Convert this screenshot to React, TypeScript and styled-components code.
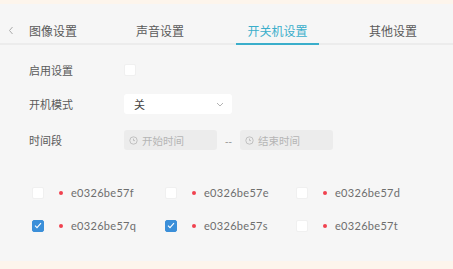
import React from "react";
import styled, { createGlobalStyle } from "styled-components";

const Global = createGlobalStyle`
  html, body { margin: 0; padding: 0; background: #fdf5ec; }
  body { font-family: "Noto Sans CJK SC", "Noto Sans", sans-serif; }
`;

const Page = styled.div`
  width: 453px;
  height: 269px;
  display: flex;
  flex-direction: column;
  background: #fdf5ec;
`;

const Panel = styled.div`
  margin-top: 4px;
  height: 257px;
  background: #f6f6f6;
  display: flex;
  flex-direction: column;
`;

const TabBar = styled.div`
  height: 39px;
  display: flex;
  align-items: stretch;
  border-bottom: 2px solid #ececec;
  padding-left: 8px;
`;

const Arrow = styled.div`
  width: 14px;
  flex-shrink: 0;
  display: flex;
  align-items: flex-end;
  padding-bottom: 8px;
  box-sizing: border-box;
  color: #aaa;
`;

const Tab = styled.div<{ $active?: boolean; $w: number; $pl?: number }>`
  width: ${(p) => p.$w}px;
  flex-shrink: 0;
  display: flex;
  align-items: flex-end;
  justify-content: center;
  font-size: 12px;
  line-height: 14px;
  padding: 0 0 5px ${(p) => p.$pl ?? 0}px;
  box-sizing: border-box;
  color: ${(p) => (p.$active ? "#3aaecb" : "#5a5a5a")};
  position: relative;
  &::after {
    content: "";
    display: ${(p) => (p.$active ? "block" : "none")};
    position: absolute;
    left: 0;
    right: 0;
    bottom: -2px;
    height: 2px;
    background: #3aaecb;
  }
`;

const Form = styled.div`
  display: flex;
  flex-direction: column;
  padding: 8px 0 0 29px;
`;

const Row = styled.div<{ $h: number }>`
  height: ${(p) => p.$h}px;
  display: flex;
  align-items: center;
`;

const Label = styled.div`
  width: 95px;
  font-size: 11px;
  color: #5a5a5a;
`;

const Box = styled.div<{ $checked?: boolean }>`
  width: 12px;
  height: 12px;
  border-radius: 2px;
  background: ${(p) => (p.$checked ? "#3b8fd9" : "#fff")};
  border: 1px solid ${(p) => (p.$checked ? "#3b8fd9" : "#f0f0f0")};
  box-sizing: border-box;
  display: flex;
  align-items: center;
  justify-content: center;
  flex-shrink: 0;
`;

const Select = styled.div`
  width: 108px;
  height: 20px;
  background: #fff;
  border-radius: 3px;
  box-sizing: border-box;
  padding: 0 8px 0 10px;
  display: flex;
  align-items: center;
  justify-content: space-between;
  font-size: 11px;
  color: #444;
`;

const TimeInput = styled.div`
  width: 93px;
  height: 20px;
  background: #ececec;
  border-radius: 3px;
  box-sizing: border-box;
  padding-left: 5px;
  display: flex;
  align-items: center;
  gap: 4px;
  font-size: 10.5px;
  color: #b5b5b5;
`;

const Sep = styled.div`
  width: 23px;
  text-align: center;
  font-size: 10px;
  color: #888;
`;

const Grid = styled.div`
  display: grid;
  grid-template-columns: 133px 131px 120px;
  row-gap: 14px;
  padding: 25px 0 0 32px;
`;

const Item = styled.div`
  display: flex;
  align-items: center;
  height: 19px;
`;

const Dot = styled.div`
  width: 4px;
  height: 4px;
  border-radius: 50%;
  background: #f0414f;
  margin: 0 8px 0 15px;
`;

const Code = styled.div`
  font-family: "Lato", "Open Sans", sans-serif;
  font-size: 11px;
  color: #6e6e6e;
  letter-spacing: 0.3px;
`;

const Check = () => (
  <svg width="8" height="7" viewBox="0 0 8 7">
    <path d="M1 3.6 L3 5.6 L7 1.2" fill="none" stroke="#fff" strokeWidth="1.1" />
  </svg>
);

const Clock = () => (
  <svg width="9" height="9" viewBox="0 0 9 9">
    <circle cx="4.5" cy="4.5" r="3.7" fill="none" stroke="#bbb" strokeWidth="0.9" />
    <path d="M4.5 2.6 V4.6 H6" fill="none" stroke="#bbb" strokeWidth="0.9" />
  </svg>
);

const items = [
  { id: "e0326be57f", c: false },
  { id: "e0326be57e", c: false },
  { id: "e0326be57d", c: false },
  { id: "e0326be57q", c: true },
  { id: "e0326be57s", c: true },
  { id: "e0326be57t", c: false },
];

export default function App() {
  return (
    <Page>
      <Global />
      <Panel>
        <TabBar>
          <Arrow>
            <svg width="6" height="9" viewBox="0 0 6 9">
              <path d="M4.5 1 L1.5 4.5 L4.5 8" fill="none" stroke="#aaa" strokeWidth="1" />
            </svg>
          </Arrow>
          <Tab $w={62}>图像设置</Tab>
          <Tab $w={152}>声音设置</Tab>
          <Tab $w={83} $active>开关机设置</Tab>
          <Tab $w={134} $pl={14}>其他设置</Tab>
        </TabBar>
        <Form>
          <Row $h={33}>
            <Label>启用设置</Label>
            <Box />
          </Row>
          <Row $h={36}>
            <Label>开机模式</Label>
            <Select>
              <span>关</span>
              <svg width="8" height="5" viewBox="0 0 8 5">
                <path d="M1 1 L4 4 L7 1" fill="none" stroke="#aaa" strokeWidth="0.9" />
              </svg>
            </Select>
          </Row>
          <Row $h={36}>
            <Label>时间段</Label>
            <TimeInput>
              <Clock />
              开始时间
            </TimeInput>
            <Sep>--</Sep>
            <TimeInput>
              <Clock />
              结束时间
            </TimeInput>
          </Row>
        </Form>
        <Grid>
          {items.map((it) => (
            <Item key={it.id}>
              <Box $checked={it.c}>{it.c && <Check />}</Box>
              <Dot />
              <Code>{it.id}</Code>
            </Item>
          ))}
        </Grid>
      </Panel>
    </Page>
  );
}
